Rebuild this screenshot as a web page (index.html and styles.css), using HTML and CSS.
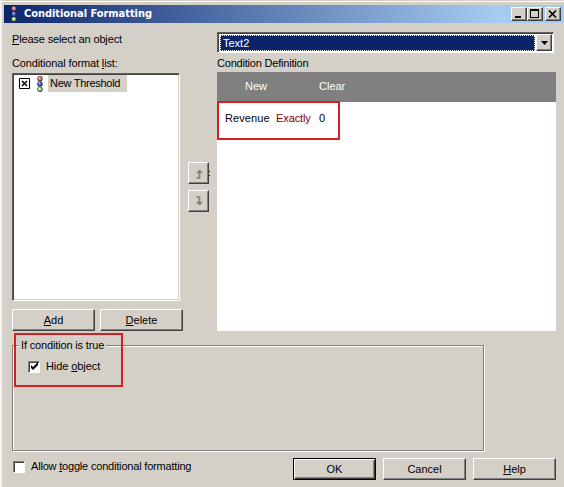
FILE: index.html
```html
<!DOCTYPE html>
<html lang="en">
<head>
<meta charset="utf-8">
<title>Conditional Formatting</title>
<link rel="stylesheet" href="styles.css">
</head>
<body>
<svg class="defs" width="0" height="0">
  <symbol id="lights" viewBox="0 0 8 16">
    <circle cx="4" cy="2.7" r="2.7" fill="#502b3c"/><circle cx="3.8" cy="2.4" r="2" fill="#dc7b80"/>
    <circle cx="4" cy="8" r="2.7" fill="#18204d"/><circle cx="3.8" cy="7.7" r="2" fill="#5874c4"/>
    <circle cx="4" cy="13.3" r="2.7" fill="#263e32"/><circle cx="3.8" cy="13" r="2" fill="#b3dc93"/>
    <path d="M3 2h1M3 7h1M3 12.5h1" stroke="#fff"/>
  </symbol>
</svg>
<div class="window">
  <header class="titlebar">
    <svg class="title-icon" width="8" height="16"><use href="#lights"/></svg>
    <h1>Conditional Formatting</h1>
    <div class="controls">
      <button class="ctl" aria-label="Minimize"><svg width="12" height="10"><path d="M2 8h6" stroke="#000" stroke-width="2"/></svg></button>
      <button class="ctl" aria-label="Maximize"><svg width="12" height="10"><path d="M1 1h9M1.5 1v8M9.5 1v8M1 8.5h9" fill="none" stroke="#000"/><path d="M1 1h9" stroke="#000" stroke-width="2"/></svg></button>
      <button class="ctl close" aria-label="Close"><svg width="12" height="10"><path d="M2 1.5l7 7M9 1.5l-7 7" stroke="#000" stroke-width="1.7"/></svg></button>
    </div>
  </header>
  <main class="columns">
    <section class="left">
      <div class="label prompt"><span class="t-prompt"><u>P</u>lease select an object</span></div>
      <div class="label"><span class="t-list">Conditional format <u>l</u>ist:</span></div>
      <div class="listbox">
        <div class="item">
          <svg class="xbox" width="11" height="11"><path d="M.5.5h10v10H.5z" fill="#fff" stroke="#000"/><path d="M3 3l5 5M8 3l-5 5" stroke="#000" stroke-width="1.5"/></svg>
          <svg width="8" height="16"><use href="#lights"/></svg>
          <span class="item-name"><span class="t-new">New Threshold</span></span>
        </div>
      </div>
      <div class="list-actions">
        <button class="btn"><span><u>A</u>dd</span></button>
        <button class="btn"><span><u>D</u>elete</span></button>
      </div>
    </section>
    <div class="movers">
      <button class="move" aria-label="Move up"><svg width="8" height="11"><path d="M1 10h3.5V2M1.5 4.5h6M3 3h3" fill="none" stroke="#85827d" stroke-width="1.7"/></svg></button>
      <button class="move" aria-label="Move down"><svg width="8" height="11"><path d="M1 1h3.5v8M1.5 6.5h6M3 8h3" fill="none" stroke="#85827d" stroke-width="1.7"/></svg></button>
      <svg class="ticks" width="2" height="5"><path d="M0 .5h1M0 4.5h1" stroke="#222"/></svg>
    </div>
    <section class="right">
      <div class="select"><div class="value">Text2</div><div class="arrow"><svg width="7" height="4"><path d="M0 0h7L3.5 4z"/></svg></div></div>
      <div class="label"><span class="t-def">Condition Definition</span></div>
      <div class="definition">
        <nav class="toolbar"><span class="new">New</span><span>Clear</span></nav>
        <div class="condition"><span class="rev">Revenue</span><span class="op">Exactly</span><span>0</span></div>
      </div>
    </section>
  </main>
  <section class="group">
    <div class="legend"><span class="t-if">If condition is true</span></div>
    <label class="check hide"><span class="box"><svg width="9" height="9"><path d="M1 3v3l2 2 5-5V0L3 5z"/></svg></span><span class="t-hide">Hide <u>o</u>bject</span></label>
    <div class="highlight"></div>
  </section>
  <footer class="footer">
    <label class="check toggle"><span class="box"></span><span class="t-allow">Allow <u>t</u>oggle conditional formatting</span></label>
    <button class="btn default"><span>OK</span></button>
    <button class="btn"><span>Cancel</span></button>
    <button class="btn"><span><u>H</u>elp</span></button>
  </footer>
</div>
</body>
</html>
```
FILE: styles.css
```css
* { box-sizing: border-box; }
body {
  margin: 0;
  width: 564px;
  height: 487px;
  overflow: hidden;
  background: #d4d0c8;
  color: #000;
  font: 11px/13px "Liberation Sans", Arial, sans-serif;
}
.defs { position: absolute; }
svg { display: block; flex: none; }
u { text-decoration: underline; text-underline-offset: 1px; text-decoration-thickness: 1px; }
button { font: inherit; color: inherit; padding: 0; margin: 0; }
.window {
  height: 487px;
  border-left: 2px solid #f6f4ee;
  border-top: 1px solid #d4d0c8;
  box-shadow: inset 0 1px #fff;
}
.titlebar {
  display: flex;
  align-items: center;
  height: 22px;
  margin-left: 2px;
  border-top: 4px solid transparent;
  background: linear-gradient(90deg, #0c266d, #a6caf0 490px) padding-box;
  color: #fff;
}
.title-icon { margin-left: 6px; }
h1 {
  margin: 0 auto 0 6px;
  font: bold 11px/16px "DejaVu Sans Condensed", "DejaVu Sans", sans-serif;
  letter-spacing: -0.05px;
  white-space: nowrap;
}
.controls { display: flex; margin-right: 3px; }
.ctl, .move, .arrow {
  display: flex;
  align-items: center;
  justify-content: center;
  background: #d4d0c8;
  border: 1px solid;
  border-color: #fff #404040 #404040 #fff;
  box-shadow: inset -1px -1px #808080;
}
.ctl { width: 16px; height: 14px; }
.close { margin-left: 2px; }
.columns {
  display: grid;
  grid-template-columns: 171px 22px 339px;
  padding-left: 10px;
  height: 308px;
}
.left { padding-top: 9px; }
.label { height: 14px; line-height: 14px; white-space: nowrap; }
.prompt { margin-bottom: 10px; }
.t-prompt { letter-spacing: -.14px; }
.t-list { letter-spacing: -.13px; }
.t-new { letter-spacing: -.28px; }
.t-def { letter-spacing: -.2px; }
.t-if { letter-spacing: -.15px; }
.t-hide { letter-spacing: -.08px; }
.t-allow { letter-spacing: -.19px; }
.listbox {
  width: 168px;
  height: 228px;
  margin-top: 3px;
  padding: 1px 0 0 6px;
  background: #fff;
  border: 1px solid;
  border-color: #606060 #fff #fff #606060;
  box-shadow: inset 1px 1px #404040, inset -1px -1px #d4d0c8;
}
.item { display: flex; align-items: center; height: 17px; }
.xbox { margin-right: 6px; }
.item svg + svg { margin-right: 4px; }
.item-name { width: 79px; height: 17px; padding: 2px 0 0 2px; background: #d4d0c8; white-space: nowrap; }
.list-actions { display: flex; gap: 5px; margin-top: 8px; }
.btn {
  width: 83px;
  height: 22px;
  background: #d4d0c8;
  border: 1px solid;
  border-color: #fff #404040 #404040 #fff;
  box-shadow: inset -1px -1px #808080;
}
.default { border-color: #000; box-shadow: inset 1px 1px #fff, inset -1px -1px #404040, inset -2px -2px #808080; }
.movers { position: relative; padding: 139px 0 0 5px; }
.move { width: 21px; height: 22px; margin-bottom: 6px; }
.ticks { position: absolute; left: 26px; top: 148px; }
.right { padding: 9px 0 0 12px; width: 351px; }
.select {
  display: flex;
  width: 337px;
  height: 21px;
  padding: 1px;
  background: #fff;
  border: 1px solid;
  border-color: #606060 #fff #fff #606060;
  box-shadow: inset 1px 1px #404040;
}
.value {
  flex: 1;
  height: 16px;
  margin: 1px;
  padding-left: 2px;
  border: 1px dotted #fff;
  background: #0a246a;
  color: #fff;
  line-height: 15px;
}
.arrow { width: 16px; height: 17px; }
.select + .label { margin-top: 3px; }
.definition { height: 259px; margin-top: 2px; width: 339px; background: #fff; }
.toolbar { display: flex; height: 30px; padding: 8px 0 0 28px; background: #808080; color: #fff; }
.new { width: 74px; }
.condition {
  display: flex;
  width: 123px;
  height: 39px;
  margin-top: -1px;
  position: relative;
  padding: 9px 0 0 6px;
  border: 2px solid #d42024;
}
.rev { width: 51px; letter-spacing: .1px; }
.op { width: 43px; color: #800000; letter-spacing: -.1px; }
.group {
  position: relative;
  width: 472px;
  height: 106px;
  margin: 14px 0 0 10px;
  border: 1px solid #808080;
  box-shadow: 1px 1px #fff, inset 1px 1px #fff;
}
.legend { width: 87px; height: 13px; margin: -7px 0 0 6px; padding-left: 2px; background: #d4d0c8; white-space: nowrap; }
.check { display: flex; align-items: center; white-space: nowrap; }
.hide { margin: 8px 0 0 15px; }
.box {
  display: flex;
  align-items: center;
  justify-content: center;
  flex: none;
  width: 12px;
  height: 12px;
  margin-right: 6px;
  background: #fff;
  border: 1px solid;
  border-color: #808080 #fff #fff #808080;
  box-shadow: inset 1px 1px #404040;
}
.highlight { position: absolute; left: 1px; top: -13px; width: 109px; height: 54px; border: 2px solid #d42024; }
.footer { display: flex; gap: 7px; margin: 7px 0 0 11px; }
.toggle { width: 273px; height: 17px; }
```
